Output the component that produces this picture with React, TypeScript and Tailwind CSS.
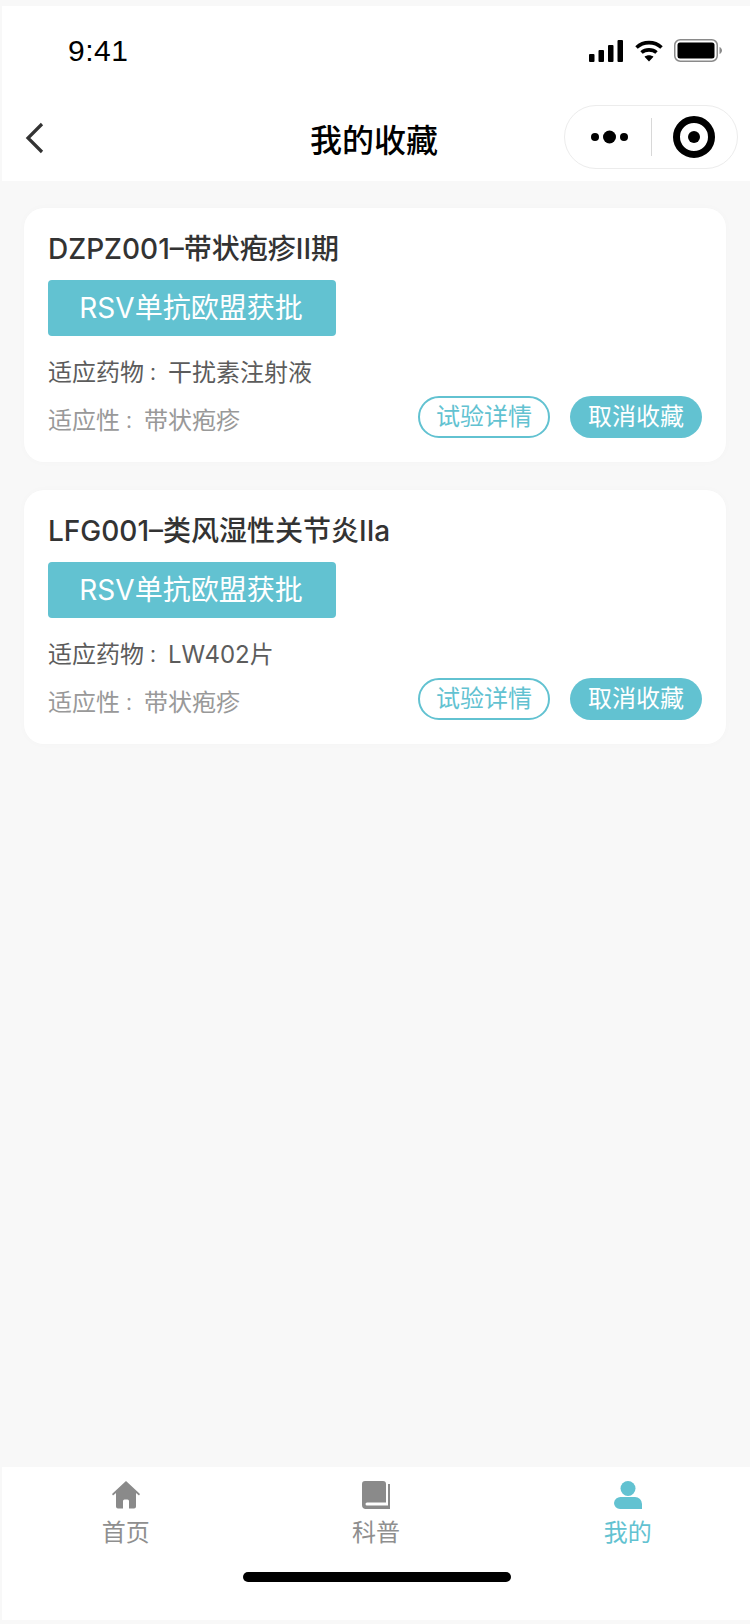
import React from 'react'

const cards = [
  { title: 'DZPZ001–带状疱疹II期', drug: '干扰素注射液' },
  { title: 'LFG001–类风湿性关节炎IIa', drug: 'LW402片' },
]

function Colon() {
  return <span className="mr-[6px] font-['Inter','Noto_Sans_CJK_TC',sans-serif] text-[18px] leading-none">：</span>
}

function StatusBar() {
  return (
    <div className="flex h-[88px] items-center justify-between pl-[66px] pr-[28px] pt-[1px]">
      <span className="font-['Liberation_Sans',sans-serif] text-[30px] leading-none tracking-[0.5px] text-black">9:41</span>
      <div className="flex items-center">
        <svg width="34" height="22" viewBox="0 0 34 22" className="mr-[12px]">
          <rect x="0" y="14" width="5.5" height="8" rx="1" fill="#000" />
          <rect x="9.5" y="10" width="5.5" height="12" rx="1" fill="#000" />
          <rect x="19" y="5" width="5.5" height="17" rx="1" fill="#000" />
          <rect x="28.5" y="0" width="5.5" height="22" rx="1" fill="#000" />
        </svg>
        <svg width="28" height="22" viewBox="0 0 28 22" className="mr-[11px]">
          <path d="M1.5 7.5 C8.500 1 19.5 1 26.5 7.5" fill="none" stroke="#000" strokeWidth="3.6" />
          <path d="M6.5 12.5 C10.5 9 17.5 9 21.5 12.5" fill="none" stroke="#000" strokeWidth="3.6" />
          <path d="M14 21.5 L9.5 16.8 C12 14.8 16 14.8 18.500 16.8 Z" fill="#000" />
        </svg>
        <svg width="48" height="23" viewBox="0 0 48 23">
          <rect x="0.75" y="0.75" width="42.5" height="21.5" rx="5.5" fill="none" stroke="#8a8a8a" strokeWidth="1.5" />
          <rect x="3.5" y="3.5" width="37" height="16" rx="2.5" fill="#000" />
          <path d="M45.5 8 C47 8.6 48 10 48 11.5 C48 13 47 14.4 45.5 15 Z" fill="#8a8a8a" />
        </svg>
      </div>
    </div>
  )
}

function NavBar() {
  return (
    <div className="relative flex h-[87px] items-start justify-center">
      <svg width="20" height="32" viewBox="0 0 20 32" className="absolute left-[23px] top-[28px]">
        <path d="M17 2 L3 16 L17 30" fill="none" stroke="#333" strokeWidth="3.2" />
      </svg>
      <span className="mr-[4px] mt-[23px] text-[32px] font-medium leading-[48px] text-black">我的收藏</span>
      <div className="absolute left-[562px] top-[11px] flex h-[64px] w-[174px] items-center rounded-full border border-[#ececec] bg-white pl-[26px]">
        <svg width="38" height="14" viewBox="0 0 38 14">
          <circle cx="4" cy="7" r="4" fill="#000" />
          <circle cx="18.5" cy="7" r="6.5" fill="#000" />
          <circle cx="33" cy="7" r="4" fill="#000" />
        </svg>
        <div className="ml-[22px] h-[38px] w-px bg-[#d8d8d8]" />
        <svg width="42" height="42" viewBox="0 0 42 42" className="ml-[21px]">
          <circle cx="21" cy="21" r="17.5" fill="none" stroke="#000" strokeWidth="7" />
          <circle cx="21" cy="21" r="6" fill="#000" />
        </svg>
      </div>
    </div>
  )
}

function Card({ title, drug }: { title: string; drug: string }) {
  return (
    <div className="h-[254px] rounded-[20px] bg-white px-[24px] pt-[21px] shadow-[0_0_8px_rgba(0,0,0,0.02)]">
      <p className="text-[28px] font-medium leading-[40px] text-[#333]">{title}</p>
      <div className="mt-[11px] flex h-[56px] w-[288px] items-center justify-center rounded-[4px] bg-[#62c2d1] pr-[2px] text-[28px] text-white">
        RSV单抗欧盟获批
      </div>
      <p className="mt-[19px] text-[24px] leading-[36px] text-[#5c5c5c]">适应药物<Colon />{drug}</p>
      <div className="mt-[5px] flex items-start justify-between">
        <p className="mt-[7px] text-[24px] leading-[36px] text-[#999]">适应性<Colon />带状疱疹</p>
        <div className="flex gap-[20px]">
          <button className="h-[42px] w-[132px] rounded-full border-2 border-[#62c2d1] text-[24px] leading-none text-[#62c2d1]">试验详情</button>
          <button className="h-[42px] w-[132px] rounded-full bg-[#62c2d1] text-[24px] leading-none text-white">取消收藏</button>
        </div>
      </div>
    </div>
  )
}

function TabBar() {
  return (
    <div className="mb-[4px] ml-[2px] h-[153px] bg-white">
      <div className="grid grid-cols-3 pt-[14px]">
        <div className="flex flex-col items-center pr-[2px]">
          <svg width="28" height="28" viewBox="0 0 28 28">
            <path d="M14 0 L28 13 L27 14.500 L24 12 L24 25.500 a2 2 0 0 1 -2 2 L17 27.500 L17 20 a1.500 1.500 0 0 0 -1.500 -1.500 L12.500 18.500 a1.500 1.500 0 0 0 -1.500 1.500 L11 27.500 L6 27.500 a2 2 0 0 1 -2 -2 L4 12 L1 14.500 L0 13 Z" fill="#8a8a8a" />
          </svg>
          <span className="mt-[6px] text-[24px] leading-[36px] text-[#8f8f8f]">首页</span>
        </div>
        <div className="flex flex-col items-center">
          <svg width="28" height="28" viewBox="0 0 28 28">
            <path d="M3 0 L21 0 a3 3 0 0 1 3 3 L24 21.500 L5 21.500 a1.500 1.500 0 0 0 -1.500 1.500 a1.500 1.500 0 0 0 1.500 1.500 L28 24.500 L28 28 L4 28 a4 4 0 0 1 -4 -4 L0 3 a3 3 0 0 1 3 -3 Z" fill="#8a8a8a" />
            <rect x="26" y="3" width="2" height="24" fill="#8a8a8a" />
            <rect x="3" y="25.500" width="25" height="2.500" fill="#8a8a8a" />
          </svg>
          <span className="mt-[6px] text-[24px] leading-[36px] text-[#8f8f8f]">科普</span>
        </div>
        <div className="flex flex-col items-center pl-[5px]">
          <svg width="28" height="28" viewBox="0 0 28 28">
            <circle cx="14" cy="7.500" r="7.500" fill="#62c2d1" />
            <path d="M7 16 L21 16 a7 7 0 0 1 7 7 L28 28 L6 28 a6 6 0 0 1 -6 -6 a6.500 6.500 0 0 1 7 -6 Z" fill="#62c2d1" />
          </svg>
          <span className="mt-[6px] text-[24px] leading-[36px] text-[#62c2d1]">我的</span>
        </div>
      </div>
      <div className="ml-[241px] mt-[21px] h-[10px] w-[268px] rounded-full bg-black" />
    </div>
  )
}

export default function App() {
  return (
    <div className="flex h-[1624px] w-[750px] flex-col bg-[#f8f8f8] font-['Inter','Noto_Sans_CJK_SC',sans-serif]">
      <div className="ml-[2px] mt-[6px] bg-white">
        <StatusBar />
        <NavBar />
      </div>
      <div className="flex flex-1 flex-col gap-[28px] px-[24px] pt-[27px]">
        {cards.map((c) => (
          <Card key={c.title} title={c.title} drug={c.drug} />
        ))}
      </div>
      <TabBar />
    </div>
  )
}
